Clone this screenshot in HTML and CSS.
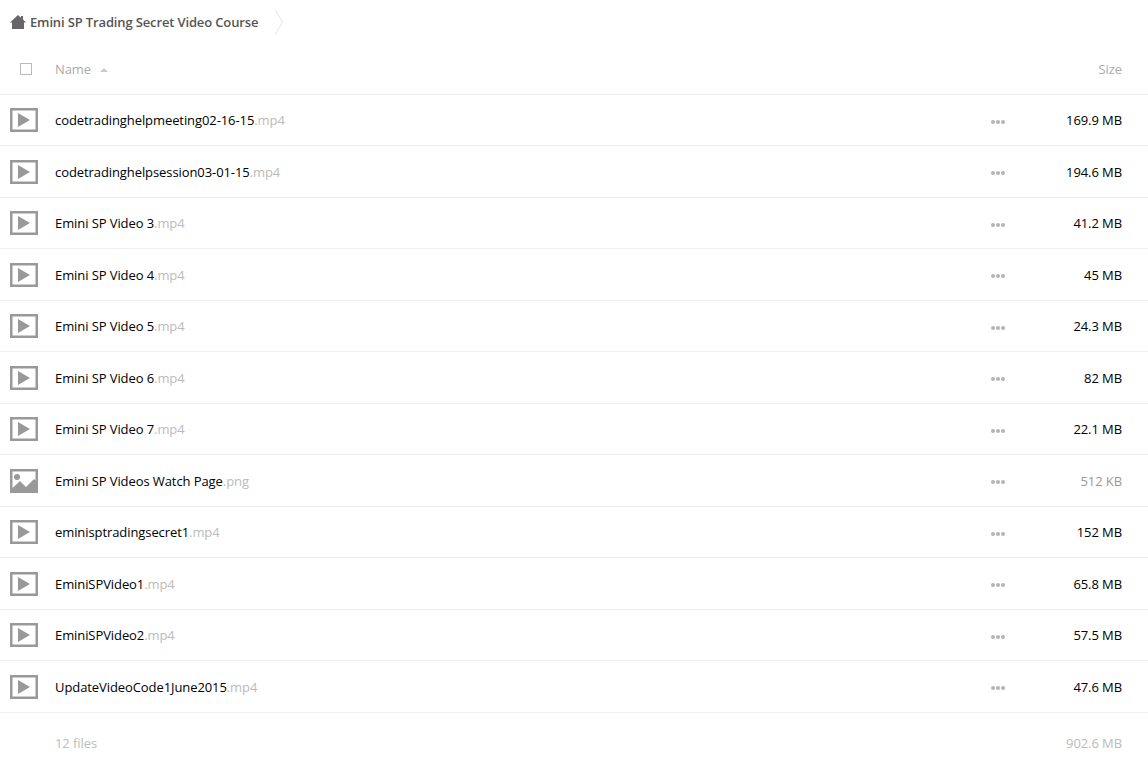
FILE: index.html
```html
<!DOCTYPE html>
<html>
<head>
    <meta charset="UTF-8">
    <title>Emini SP Trading Secret Video Course</title>
    <link rel="stylesheet" href="styles.css">
</head>
<body>
    <svg class="defs" width="0" height="0">
        <symbol id="icon-video" viewBox="0 0 28 24">
            <path fill="#999" fill-rule="evenodd" d="M0 0h28v24H0zM2.500 2.500v19h23v-19z"/>
            <path fill="#999" d="M8 5L20 12 8 19z"/>
        </symbol>
        <symbol id="icon-image" viewBox="0 0 28 24">
            <path fill="#999" fill-rule="evenodd" d="M0 0h28v24H0zM2.500 2.500v16.500l7.500-7 6 6 8-8 1.500 1.500V2.500z"/>
            <circle fill="#999" cx="7" cy="8" r="3"/>
        </symbol>
    </svg>

    <div class="crumbs">
        <svg class="home" viewBox="0 0 16 14" width="16" height="14">
            <path fill="#666" d="M8 0l3 2.700V1h2v3.500L16 7.500h-2V14H2V7.500H0z"/>
        </svg>
        <span class="crumb-name">Emini SP Trading Secret Video Course</span>
        <svg class="crumb-arrow" viewBox="0 0 10 26" width="10" height="26">
            <path fill="none" stroke="#e4e4e4" d="M1 0.500L8.500 13 1 25.500"/>
        </svg>
    </div>

    <div class="row head">
        <div class="col-icon"><span class="checkbox"></span></div>
        <div class="col-name">Name <span class="sort"></span></div>
        <div class="col-size">Size</div>
    </div>

    <div class="row">
        <div class="col-icon"><svg class="type"><use href="#icon-video"/></svg></div>
        <div class="col-name">codetradinghelpmeeting02-16-15<span class="ext">.mp4</span></div>
        <div class="col-more"><i></i><i></i><i></i></div>
        <div class="col-size">169.9 MB</div>
    </div>
    <div class="row">
        <div class="col-icon"><svg class="type"><use href="#icon-video"/></svg></div>
        <div class="col-name">codetradinghelpsession03-01-15<span class="ext">.mp4</span></div>
        <div class="col-more"><i></i><i></i><i></i></div>
        <div class="col-size">194.6 MB</div>
    </div>
    <div class="row">
        <div class="col-icon"><svg class="type"><use href="#icon-video"/></svg></div>
        <div class="col-name">Emini SP Video 3<span class="ext">.mp4</span></div>
        <div class="col-more"><i></i><i></i><i></i></div>
        <div class="col-size">41.2 MB</div>
    </div>
    <div class="row">
        <div class="col-icon"><svg class="type"><use href="#icon-video"/></svg></div>
        <div class="col-name">Emini SP Video 4<span class="ext">.mp4</span></div>
        <div class="col-more"><i></i><i></i><i></i></div>
        <div class="col-size">45 MB</div>
    </div>
    <div class="row">
        <div class="col-icon"><svg class="type"><use href="#icon-video"/></svg></div>
        <div class="col-name">Emini SP Video 5<span class="ext">.mp4</span></div>
        <div class="col-more"><i></i><i></i><i></i></div>
        <div class="col-size">24.3 MB</div>
    </div>
    <div class="row">
        <div class="col-icon"><svg class="type"><use href="#icon-video"/></svg></div>
        <div class="col-name">Emini SP Video 6<span class="ext">.mp4</span></div>
        <div class="col-more"><i></i><i></i><i></i></div>
        <div class="col-size">82 MB</div>
    </div>
    <div class="row">
        <div class="col-icon"><svg class="type"><use href="#icon-video"/></svg></div>
        <div class="col-name">Emini SP Video 7<span class="ext">.mp4</span></div>
        <div class="col-more"><i></i><i></i><i></i></div>
        <div class="col-size">22.1 MB</div>
    </div>
    <div class="row">
        <div class="col-icon"><svg class="type"><use href="#icon-image"/></svg></div>
        <div class="col-name">Emini SP Videos Watch Page<span class="ext">.png</span></div>
        <div class="col-more"><i></i><i></i><i></i></div>
        <div class="col-size muted">512 KB</div>
    </div>
    <div class="row">
        <div class="col-icon"><svg class="type"><use href="#icon-video"/></svg></div>
        <div class="col-name">eminisptradingsecret1<span class="ext">.mp4</span></div>
        <div class="col-more"><i></i><i></i><i></i></div>
        <div class="col-size">152 MB</div>
    </div>
    <div class="row">
        <div class="col-icon"><svg class="type"><use href="#icon-video"/></svg></div>
        <div class="col-name">EminiSPVideo1<span class="ext">.mp4</span></div>
        <div class="col-more"><i></i><i></i><i></i></div>
        <div class="col-size">65.8 MB</div>
    </div>
    <div class="row">
        <div class="col-icon"><svg class="type"><use href="#icon-video"/></svg></div>
        <div class="col-name">EminiSPVideo2<span class="ext">.mp4</span></div>
        <div class="col-more"><i></i><i></i><i></i></div>
        <div class="col-size">57.5 MB</div>
    </div>
    <div class="row">
        <div class="col-icon"><svg class="type"><use href="#icon-video"/></svg></div>
        <div class="col-name">UpdateVideoCode1June2015<span class="ext">.mp4</span></div>
        <div class="col-more"><i></i><i></i><i></i></div>
        <div class="col-size">47.6 MB</div>
    </div>

    <div class="row summary">
        <div class="col-icon"></div>
        <div class="col-name">12 files</div>
        <div class="col-size">902.6 MB</div>
    </div>
</body>
</html>
```

FILE: styles.css
```css
body {
    margin: 0;
    font-family: "Open Sans", sans-serif;
    font-size: 13px;
    color: #000;
    background: #fff;
    overflow: hidden;
}

.defs {
    position: absolute;
}

.crumbs {
    display: flex;
    align-items: center;
    height: 44px;
    padding-left: 10px;
    color: #555;
    font-weight: 600;
    letter-spacing: -0.14px;
}

.home {
    margin-right: 4px;
}

.crumb-arrow {
    margin-left: 16px;
}

.row {
    display: flex;
    align-items: center;
    height: 51.5px;
    box-sizing: border-box;
    border-bottom: 1px solid #eee;
}

.head {
    height: 50.75px;
    color: #aaa;
}

.summary {
    border-bottom: none;
    color: #bbb;
    margin-top: 4px;
}

.col-icon {
    display: flex;
    width: 55px;
    padding-left: 10px;
    box-sizing: border-box;
}

.col-name {
    flex: 1;
    letter-spacing: -0.085px;
}

.col-more {
    display: flex;
    gap: 1px;
    width: 61px;
    padding-top: 3px;
}

.col-more i {
    width: 4px;
    height: 4px;
    border-radius: 50%;
    background: #b4b4b4;
}

.col-size {
    width: 70px;
    padding-right: 26px;
    text-align: right;
    white-space: nowrap;
    letter-spacing: -0.085px;
}

.muted {
    color: #999;
}

.ext {
    color: #bbb;
}

.type {
    display: block;
    width: 28px;
    height: 24px;
}

.checkbox {
    display: block;
    width: 10px;
    height: 10px;
    margin-left: 10px;
    border: 1px solid #bbb;
}

.sort {
    display: inline-block;
    margin: 0 0 2px 6px;
    border: 4px solid transparent;
    border-top: none;
    border-bottom: 4px solid #ccc;
}
```
